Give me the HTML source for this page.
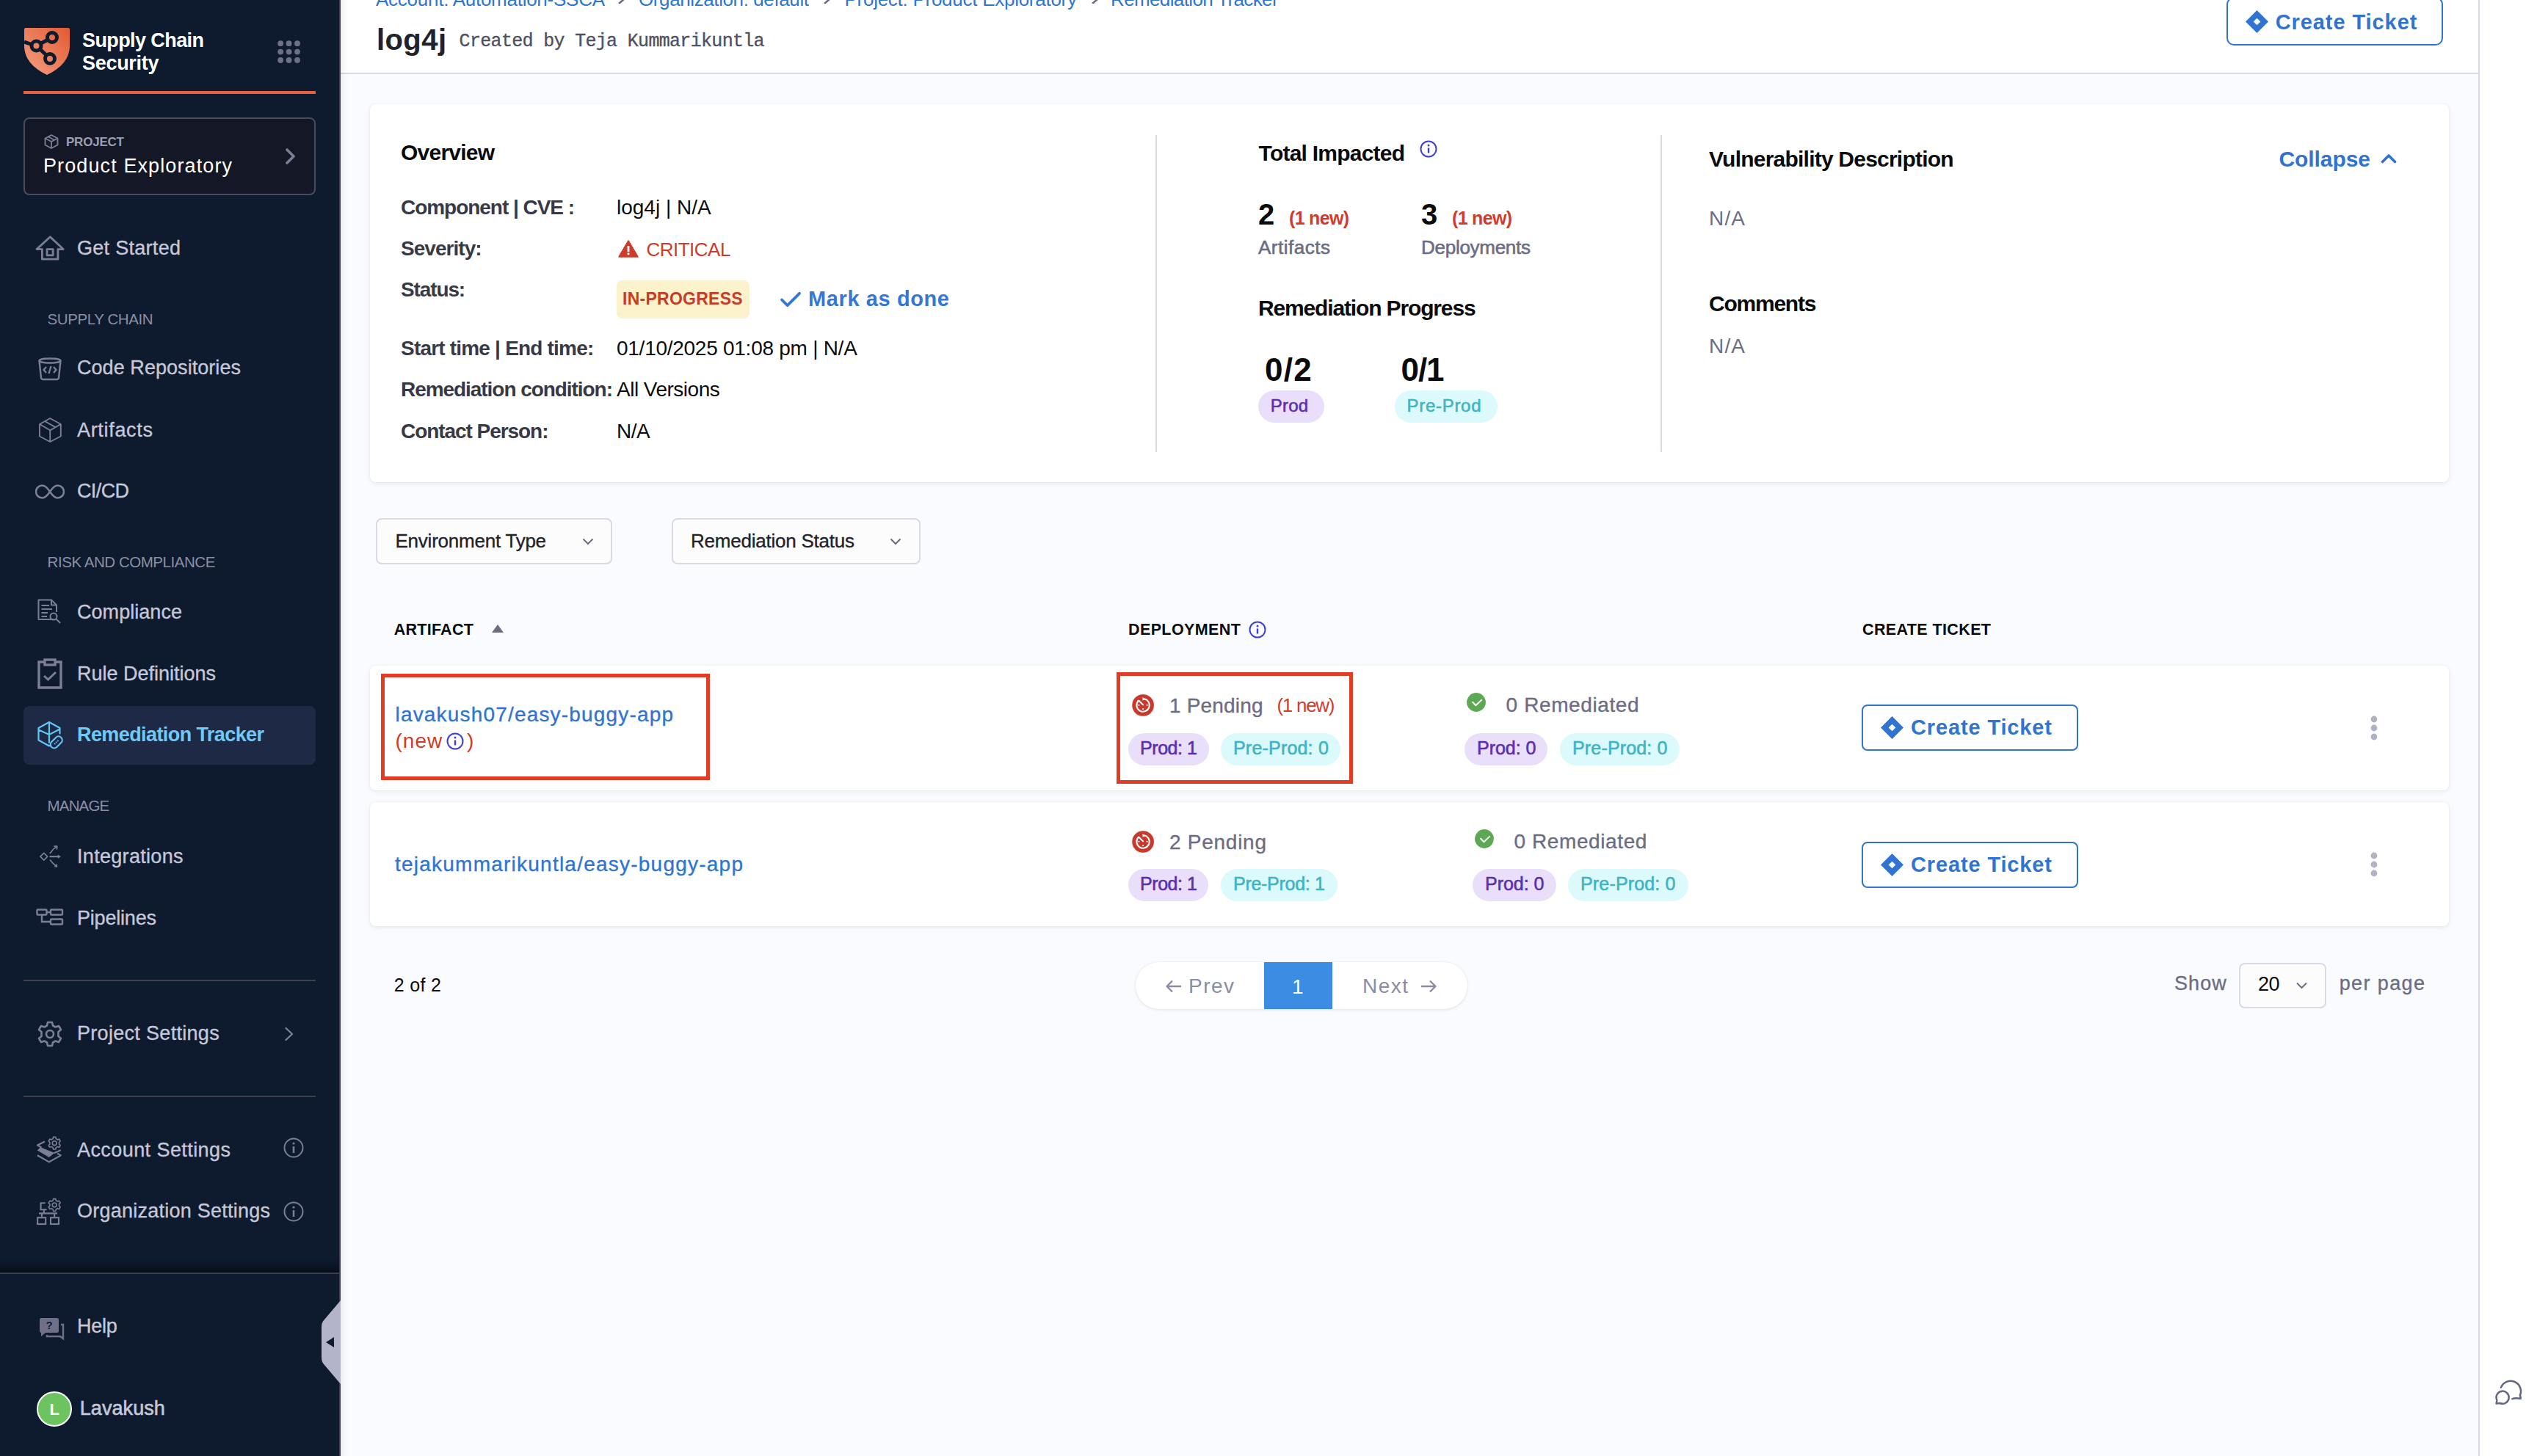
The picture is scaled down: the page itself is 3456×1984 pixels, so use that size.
<!DOCTYPE html>
<html><head><meta charset="utf-8"><style>
html,body{margin:0;padding:0;width:3456px;height:1984px;overflow:hidden;background:#f9fbfe;}
#root{position:relative;width:3456px;height:1984px;overflow:hidden;font-family:'Liberation Sans',sans-serif;}
</style></head><body><div id="root">
<div style="position:absolute;left:0px;top:0px;width:3456px;height:1984px;background:#f9fbfe"></div>
<div style="position:absolute;left:464px;top:0px;width:2913px;height:101px;background:#fff;border-bottom:2px solid #d9dae6;box-sizing:border-box"></div>
<div style="position:absolute;left:3376px;top:0px;width:80px;height:1984px;background:#fff;border-left:2px solid #d9dae6;box-sizing:border-box"></div>
<div style="position:absolute;left:0px;top:0px;width:464px;height:1984px;background:#0e1b2f"></div>
<div style="position:absolute;left:462px;top:0px;width:2px;height:1984px;background:#3a3d50"></div>
<div style="position:absolute;left:464px;top:0px;width:10px;height:1984px;background:linear-gradient(to right,rgba(40,41,61,0.06),rgba(40,41,61,0))"></div>
<svg style="position:absolute;left:33px;top:38px;" width="62" height="64" viewBox="0 0 62 64" fill="none"><defs><linearGradient id="lg" x1="0" y1="1" x2="1" y2="0"><stop offset="0" stop-color="#f3a184"/><stop offset="1" stop-color="#e35a30"/></linearGradient></defs>
<path d="M2 0H60Q62 0 62 2V24C62 42 50 55 31 64C12 55 0 42 0 24V2Q0 0 2 0Z" fill="url(#lg)"/>
<g stroke="#0e1b2f" stroke-width="5" fill="none"><circle cx="38" cy="13" r="6.5"/><circle cx="16.5" cy="24.5" r="6.5"/><circle cx="35" cy="42" r="6.5"/>
<path d="M22 21.5L32.5 16M21.5 29L30 37M10 22.5L0 19"/></g></svg>
<div style="position:absolute;left:112px;top:41.55px;font:700 27px/27px 'Liberation Sans';color:#ffffff;white-space:pre;letter-spacing:-0.592px;">Supply Chain</div>
<div style="position:absolute;left:112px;top:73.05px;font:700 27px/27px 'Liberation Sans';color:#ffffff;white-space:pre;letter-spacing:-0.295px;">Security</div>
<svg style="position:absolute;left:377px;top:55px;" width="34" height="34" viewBox="0 0 34 34" fill="none"><circle cx="5.2" cy="4.2" r="3.9" fill="#6e7088"/><circle cx="5.2" cy="15.6" r="3.9" fill="#6e7088"/><circle cx="5.2" cy="27.0" r="3.9" fill="#6e7088"/><circle cx="16.6" cy="4.2" r="3.9" fill="#6e7088"/><circle cx="16.6" cy="15.6" r="3.9" fill="#6e7088"/><circle cx="16.6" cy="27.0" r="3.9" fill="#6e7088"/><circle cx="28.0" cy="4.2" r="3.9" fill="#6e7088"/><circle cx="28.0" cy="15.6" r="3.9" fill="#6e7088"/><circle cx="28.0" cy="27.0" r="3.9" fill="#6e7088"/></svg>
<div style="position:absolute;left:32px;top:124px;width:398px;height:4px;background:#e8603e"></div>
<div style="position:absolute;left:32px;top:160px;width:398px;height:106px;background:#141826;border:2px solid #4a4c5e;border-radius:8px;box-sizing:border-box"></div>
<svg style="position:absolute;left:59px;top:182px;" width="22" height="22" viewBox="0 0 22 22" fill="none"><g stroke="#7c7e96" stroke-width="1.8" stroke-linejoin="round"><path d="M11 2L19.5 6.5V15.5L11 20L2.5 15.5V6.5Z"/><path d="M2.5 6.5L11 11L19.5 6.5M11 11V20"/><path d="M6.5 4.3L15 8.8"/></g></svg>
<div style="position:absolute;left:90px;top:184.55px;font:700 17px/17px 'Liberation Sans';color:#9c9eb4;white-space:pre;letter-spacing:-0.216px;">PROJECT</div>
<div style="position:absolute;left:59px;top:213.05px;font:400 27px/27px 'Liberation Sans';color:#ffffff;white-space:pre;letter-spacing:1.105px;">Product Exploratory</div>
<svg style="position:absolute;left:388px;top:202px;" width="16" height="22" viewBox="0 0 16 22" fill="none"><path d="M3 2L12 11L3 20" stroke="#7c7e96" stroke-width="3.6" stroke-linecap="round" stroke-linejoin="round"/></svg>
<svg style="position:absolute;left:40px;top:300px;" width="60" height="70" viewBox="0 0 60 70" fill="none"><g stroke="#7c7e96" stroke-width="2.8" stroke-linejoin="round" fill="none"><path d="M10 39.6L28.3 22.8L46.2 39.6H38.9V53.2H17.4V39.6Z"/><rect x="24" y="39.6" width="8.2" height="8.2"/></g></svg>
<div style="position:absolute;left:105px;top:324.55px;font:400 27px/27px 'Liberation Sans';color:#c6c7d8;white-space:pre;letter-spacing:0.292px;-webkit-text-stroke:0.35px currentColor;">Get Started</div>
<div style="position:absolute;left:64.6px;top:424.57px;font:400 20.5px/20.5px 'Liberation Sans';color:#8c8ea4;white-space:pre;letter-spacing:-0.409px;">SUPPLY CHAIN</div>
<svg style="position:absolute;left:51px;top:487px;" width="34" height="32" viewBox="0 0 34 32" fill="none"><g stroke="#7c7e96" stroke-width="2.4" stroke-linejoin="round" fill="none"><ellipse cx="17" cy="4.5" rx="14.5" ry="3"/><path d="M2.5 4.5L5 28Q5.5 30 8 30H26Q28.5 30 29 28L31.5 4.5"/><path d="M12 13L8.5 17L12 21M22 13L25.5 17L22 21M18.5 12L15.5 22"/></g></svg>
<div style="position:absolute;left:105px;top:488.05px;font:400 27px/27px 'Liberation Sans';color:#c6c7d8;white-space:pre;letter-spacing:0.055px;-webkit-text-stroke:0.35px currentColor;">Code Repositories</div>
<svg style="position:absolute;left:53px;top:569px;" width="32" height="34" viewBox="0 0 32 34" fill="none"><g stroke="#7c7e96" stroke-width="1.9" stroke-linejoin="round" fill="none"><path d="M15.2 1L29.8 9V25.5L15.2 33L1 25.5V9Z"/><path d="M1 9L15.2 17.3L29.8 9M15.2 17.3V33M8 5L22.5 13.2"/></g></svg>
<div style="position:absolute;left:105px;top:573.05px;font:400 27px/27px 'Liberation Sans';color:#c6c7d8;white-space:pre;letter-spacing:0.684px;-webkit-text-stroke:0.35px currentColor;">Artifacts</div>
<svg style="position:absolute;left:48px;top:659px;" width="40" height="22" viewBox="0 0 40 22" fill="none"><path d="M20 11C16 5 13 2.5 9.5 2.5A8.5 8.5 0 0 0 9.5 19.5C13 19.5 16 17 20 11C24 5 27 2.5 30.5 2.5A8.5 8.5 0 0 1 30.5 19.5C27 19.5 24 17 20 11Z" stroke="#7c7e96" stroke-width="2.6"/></svg>
<div style="position:absolute;left:105px;top:656.05px;font:400 27px/27px 'Liberation Sans';color:#c6c7d8;white-space:pre;letter-spacing:-0.625px;-webkit-text-stroke:0.35px currentColor;">CI/CD</div>
<div style="position:absolute;left:64.6px;top:755.58px;font:400 20.5px/20.5px 'Liberation Sans';color:#8c8ea4;white-space:pre;letter-spacing:-0.453px;">RISK AND COMPLIANCE</div>
<svg style="position:absolute;left:51px;top:816px;" width="33" height="36" viewBox="0 0 33 36" fill="none"><g stroke="#7c7e96" stroke-width="2" fill="none" stroke-linejoin="round"><path d="M22 28H1.5V1.5H19L26 8.5V18"/><path d="M19 1.5V8.5H26M5.5 9H16M5.5 14H20M5.5 19H14M5.5 24H13"/><circle cx="22" cy="24" r="4.5"/><path d="M25.5 27.5L31 33"/></g></svg>
<div style="position:absolute;left:105px;top:821.05px;font:400 27px/27px 'Liberation Sans';color:#c6c7d8;white-space:pre;letter-spacing:0.047px;-webkit-text-stroke:0.35px currentColor;">Compliance</div>
<svg style="position:absolute;left:50px;top:897px;" width="36" height="42" viewBox="0 0 36 42" fill="none"><g stroke="#7c7e96" stroke-width="3.4" fill="none"><path d="M10 5H3V40H33V5H26"/><rect x="11" y="2" width="14" height="7"/><path d="M10 24L15.5 29L26 19" stroke-width="3"/></g></svg>
<div style="position:absolute;left:105px;top:905.05px;font:400 27px/27px 'Liberation Sans';color:#c6c7d8;white-space:pre;letter-spacing:-0.006px;-webkit-text-stroke:0.35px currentColor;">Rule Definitions</div>
<div style="position:absolute;left:32px;top:962px;width:398px;height:80px;background:#1e2a45;border-radius:8px"></div>
<svg style="position:absolute;left:40px;top:970px;" width="60" height="60" viewBox="0 0 60 60" fill="none"><g stroke="#5fc5f5" stroke-width="2.2" fill="none" stroke-linejoin="round" stroke-linecap="round"><path d="M27 14L41.5 22V29.5M27 14L12.5 22V38.5L27 46.5L29 45.4M12.5 24.5L27 31L41.5 23.5M27 15V42"/><rect x="27.5" y="36.5" width="18.5" height="10" rx="5" transform="rotate(-45 36.7 41.5)"/></g><g fill="#5fc5f5"><circle cx="34.6" cy="43.6" r="1"/><circle cx="36.7" cy="41.5" r="1"/><circle cx="38.8" cy="39.4" r="1"/></g></svg>
<div style="position:absolute;left:105px;top:988.05px;font:700 27px/27px 'Liberation Sans';color:#6fcaf7;white-space:pre;letter-spacing:-0.590px;">Remediation Tracker</div>
<div style="position:absolute;left:64.6px;top:1088.17px;font:400 20.5px/20.5px 'Liberation Sans';color:#8c8ea4;white-space:pre;letter-spacing:-0.852px;">MANAGE</div>
<svg style="position:absolute;left:40px;top:1140px;" width="60" height="60" viewBox="0 0 60 60" fill="none"><g stroke="#7c7e96" stroke-width="1.7" fill="none" stroke-linecap="round" stroke-linejoin="round"><path d="M19.8 22.3L24.7 27.2L19.8 32.1L14.9 27.2Z"/><path d="M28.4 27.2H40" stroke-width="2.2"/><path d="M28.4 22.5Q32 17 37.2 13.4M34 13.2L37.7 13L37.5 17"/><path d="M28.4 32.1Q32 37 37.2 40.8"/></g><path d="M43 27.2L38.8 24.6V29.8Z" fill="#7c7e96"/><path d="M38.3 41.8L33.6 41.2L37.8 36.8Z" fill="#7c7e96"/></svg>
<div style="position:absolute;left:105px;top:1154.05px;font:400 27px/27px 'Liberation Sans';color:#c6c7d8;white-space:pre;letter-spacing:0.310px;-webkit-text-stroke:0.35px currentColor;">Integrations</div>
<svg style="position:absolute;left:49px;top:1238px;" width="38" height="24" viewBox="0 0 38 24" fill="none"><g stroke="#7c7e96" stroke-width="2.4" fill="none"><rect x="1.5" y="1.5" width="13" height="7" rx="1"/><rect x="20" y="1.5" width="16" height="7" rx="1"/><rect x="20" y="14.5" width="16" height="7" rx="1"/><path d="M14.5 5H20M8 8.5V18H20"/></g></svg>
<div style="position:absolute;left:105px;top:1238.05px;font:400 27px/27px 'Liberation Sans';color:#c6c7d8;white-space:pre;letter-spacing:-0.197px;-webkit-text-stroke:0.35px currentColor;">Pipelines</div>
<div style="position:absolute;left:32px;top:1335px;width:398px;height:2px;background:#3c3f52"></div>
<svg style="position:absolute;left:51px;top:1391px;" width="34" height="36" viewBox="0 0 34 36" fill="none"><g stroke="#7c7e96" stroke-width="2.6" fill="none" stroke-linejoin="round"><path d="M14 2H20L21 6.5L24.5 8.5L29 7L32 12L28.5 15V21L32 24L29 29L24.5 27.5L21 29.5L20 34H14L13 29.5L9.5 27.5L5 29L2 24L5.5 21V15L2 12L5 7L9.5 8.5L13 6.5Z"/><circle cx="17" cy="18" r="5"/></g></svg>
<div style="position:absolute;left:105px;top:1395.05px;font:400 27px/27px 'Liberation Sans';color:#c6c7d8;white-space:pre;letter-spacing:0.307px;-webkit-text-stroke:0.35px currentColor;">Project Settings</div>
<svg style="position:absolute;left:387px;top:1399px;" width="14" height="20" viewBox="0 0 14 20" fill="none"><path d="M2.5 2L11 10L2.5 18" stroke="#7c7e96" stroke-width="2.4" stroke-linecap="round" stroke-linejoin="round"/></svg>
<div style="position:absolute;left:32px;top:1493px;width:398px;height:2px;background:#3c3f52"></div>
<svg style="position:absolute;left:40px;top:1540px;" width="60" height="60" viewBox="0 0 60 60" fill="none"><g stroke="#7c7e96" stroke-width="2.2" fill="none" stroke-linejoin="round"><path d="M21 15.4L11 20.6L16.5 23.5"/><path d="M10.8 34.2L26.8 43.4L42.8 34.4L38 31.6"/></g><path d="M10.7 27.6L15.2 23.2L34.2 31L26.8 37Z" fill="#7c7e96"/><path d="M33.5 31.2L42.8 27.2" stroke="#7c7e96" stroke-width="2.2"/><g transform="translate(34.2 17.7)"><path d="M-1.6 -8.3H1.6L2.1 -6A6.2 6.2 0 0 1 4.2 -4.8L6.4 -5.6L8 -2.8L6.3 -1.2A6.2 6.2 0 0 1 6.3 1.2L8 2.8L6.4 5.6L4.2 4.8A6.2 6.2 0 0 1 2.1 6L1.6 8.3H-1.6L-2.1 6A6.2 6.2 0 0 1 -4.2 4.8L-6.4 5.6L-8 2.8L-6.3 1.2A6.2 6.2 0 0 1 -6.3 -1.2L-8 -2.8L-6.4 -5.6L-4.2 -4.8A6.2 6.2 0 0 1 -2.1 -6Z" stroke="#7c7e96" stroke-width="1.6" fill="none" stroke-linejoin="round"/><circle r="2.9" stroke="#7c7e96" stroke-width="1.6" fill="none"/></g></svg>
<div style="position:absolute;left:105px;top:1554.05px;font:400 27px/27px 'Liberation Sans';color:#c6c7d8;white-space:pre;letter-spacing:0.425px;-webkit-text-stroke:0.35px currentColor;">Account Settings</div>
<svg style="position:absolute;left:386px;top:1550px;" width="28" height="28" viewBox="0 0 28 28" fill="none"><g stroke="#7c7e96" stroke-width="2"><circle cx="14" cy="14" r="12.5"/><path d="M14 12V21" stroke-width="2.6"/></g><circle cx="14" cy="8" r="1.6" fill="#7c7e96"/></svg>
<svg style="position:absolute;left:40px;top:1625px;" width="60" height="60" viewBox="0 0 60 60" fill="none"><g stroke="#7c7e96" stroke-width="2.1" fill="none"><path d="M21.6 14.2H15.6V23.2H23.6M19.8 23.2V28.4M13 28.4H38M16.9 28.4V33.8M34.2 28.4V33.8"/><rect x="11.2" y="34.2" width="11" height="8.8"/><rect x="29" y="34.2" width="11" height="8.8"/></g><g transform="translate(34.2 16.9)"><path d="M-1.6 -8.3H1.6L2.1 -6A6.2 6.2 0 0 1 4.2 -4.8L6.4 -5.6L8 -2.8L6.3 -1.2A6.2 6.2 0 0 1 6.3 1.2L8 2.8L6.4 5.6L4.2 4.8A6.2 6.2 0 0 1 2.1 6L1.6 8.3H-1.6L-2.1 6A6.2 6.2 0 0 1 -4.2 4.8L-6.4 5.6L-8 2.8L-6.3 1.2A6.2 6.2 0 0 1 -6.3 -1.2L-8 -2.8L-6.4 -5.6L-4.2 -4.8A6.2 6.2 0 0 1 -2.1 -6Z" stroke="#7c7e96" stroke-width="1.6" fill="none" stroke-linejoin="round"/><circle r="2.9" stroke="#7c7e96" stroke-width="1.6" fill="none"/></g></svg>
<div style="position:absolute;left:105px;top:1637.05px;font:400 27px/27px 'Liberation Sans';color:#c6c7d8;white-space:pre;letter-spacing:0.242px;-webkit-text-stroke:0.35px currentColor;">Organization Settings</div>
<svg style="position:absolute;left:386px;top:1637px;" width="28" height="28" viewBox="0 0 28 28" fill="none"><g stroke="#7c7e96" stroke-width="2"><circle cx="14" cy="14" r="12.5"/><path d="M14 12V21" stroke-width="2.6"/></g><circle cx="14" cy="8" r="1.6" fill="#7c7e96"/></svg>
<div style="position:absolute;left:0px;top:1712px;width:462px;height:22px;background:linear-gradient(to bottom,rgba(0,0,0,0),rgba(0,0,0,0.12) 50%,rgba(0,0,0,0.55))"></div>
<div style="position:absolute;left:0px;top:1734px;width:462px;height:2px;background:#3a3d4f"></div>
<svg style="position:absolute;left:52px;top:1795px;" width="38" height="34" viewBox="0 0 38 34" fill="none"><path d="M4 1H26Q28 1 28 3V19Q28 21 26 21H10L4 26V21Q2 21 2 19V3Q2 1 4 1Z" fill="#6e7088"/><path d="M31 10H34V29L30 26H12V24" stroke="#6e7088" stroke-width="2.4" fill="none"/><text x="15" y="16" font-family="Liberation Sans" font-weight="700" font-size="15" fill="#0e1b2f" text-anchor="middle">?</text></svg>
<div style="position:absolute;left:105px;top:1794.05px;font:400 27px/27px 'Liberation Sans';color:#c6c7d8;white-space:pre;letter-spacing:-0.277px;-webkit-text-stroke:0.35px currentColor;">Help</div>
<svg style="position:absolute;left:438px;top:1772px;" width="26" height="114" viewBox="0 0 26 114" fill="none"><path d="M26 0V114L4 88Q0 84 0 78V36Q0 30 4 26Z" fill="#b3b4c9"/><path d="M6 57L17 50V64Z" fill="#0e1b2f"/></svg>
<div style="position:absolute;left:50px;top:1896px;width:48px;height:48px;border-radius:50%;background:#6dc35f;border:2px solid #fff;box-sizing:border-box"></div>
<div style="position:absolute;left:67.5px;top:1910.30px;font:700 22px/22px 'Liberation Sans';color:#fff;white-space:pre;">L</div>
<div style="position:absolute;left:108.8px;top:1906.05px;font:400 27px/27px 'Liberation Sans';color:#c6c7d8;white-space:pre;letter-spacing:0.058px;-webkit-text-stroke:0.6px currentColor;">Lavakush</div>
<div style="position:absolute;left:512px;top:-14.10px;font:400 26px/26px 'Liberation Sans';color:#2f76d2;white-space:pre;letter-spacing:-0.259px;">Account: Automation-SSCA</div>
<svg style="position:absolute;left:841px;top:-9px;" width="12" height="14" viewBox="0 0 12 14" fill="none"><path d="M2 0L10 7L2 14" stroke="#6b6d85" stroke-width="2.6" fill="none"/></svg>
<div style="position:absolute;left:870px;top:-14.10px;font:400 26px/26px 'Liberation Sans';color:#2f76d2;white-space:pre;letter-spacing:-0.397px;">Organization: default</div>
<svg style="position:absolute;left:1121px;top:-9px;" width="12" height="14" viewBox="0 0 12 14" fill="none"><path d="M2 0L10 7L2 14" stroke="#6b6d85" stroke-width="2.6" fill="none"/></svg>
<div style="position:absolute;left:1150.5px;top:-14.10px;font:400 26px/26px 'Liberation Sans';color:#2f76d2;white-space:pre;letter-spacing:-0.267px;">Project: Product Exploratory</div>
<svg style="position:absolute;left:1486px;top:-9px;" width="12" height="14" viewBox="0 0 12 14" fill="none"><path d="M2 0L10 7L2 14" stroke="#6b6d85" stroke-width="2.6" fill="none"/></svg>
<div style="position:absolute;left:1513px;top:-14.10px;font:400 26px/26px 'Liberation Sans';color:#2f76d2;white-space:pre;letter-spacing:-0.627px;">Remediation Tracker</div>
<div style="position:absolute;left:513px;top:34.00px;font:700 40px/40px 'Liberation Sans';color:#22222a;white-space:pre;letter-spacing:0.414px;">log4j</div>
<div style="position:absolute;left:625.6px;top:44.00px;font:400 25px/25px 'Liberation Mono';color:#4f5162;white-space:pre;letter-spacing:-0.681px;-webkit-text-stroke:0.35px currentColor;">Created by Teja Kummarikuntla</div>
<div style="position:absolute;left:3033px;top:-4px;width:295px;height:66px;border:2px solid #3173d1;border-radius:10px;box-sizing:border-box;background:#fff"></div>
<svg style="position:absolute;left:3059px;top:14px;" width="31" height="31" viewBox="0 0 32 32" fill="none"><path d="M16 0L32 16L16 32L0 16Z" fill="#3173d1"/><path d="M16 11L21 16L16 21L11 16Z" fill="#fff"/></svg>
<div style="position:absolute;left:3099.7px;top:15.75px;font:700 29px/29px 'Liberation Sans';color:#3173d1;white-space:pre;letter-spacing:0.923px;">Create Ticket</div>
<div style="position:absolute;left:504px;top:142px;width:2832px;height:515px;background:#fff;border-radius:8px;box-shadow:0 0 2px rgba(40,41,61,0.08),0 2px 6px rgba(96,97,112,0.10)"></div>
<div style="position:absolute;left:1574px;top:184px;width:2px;height:432px;background:#d9dae6"></div>
<div style="position:absolute;left:2262px;top:184px;width:2px;height:432px;background:#d9dae6"></div>
<div style="position:absolute;left:546px;top:192.50px;font:700 30px/30px 'Liberation Sans';color:#0b0b0d;white-space:pre;letter-spacing:-0.775px;">Overview</div>
<div style="position:absolute;left:546px;top:269.20px;font:700 28px/28px 'Liberation Sans';color:#383946;white-space:pre;letter-spacing:-1.038px;">Component | CVE :</div>
<div style="position:absolute;left:546px;top:325.20px;font:700 28px/28px 'Liberation Sans';color:#383946;white-space:pre;letter-spacing:-0.962px;">Severity:</div>
<div style="position:absolute;left:546px;top:380.70px;font:700 28px/28px 'Liberation Sans';color:#383946;white-space:pre;letter-spacing:-1.118px;">Status:</div>
<div style="position:absolute;left:546px;top:460.70px;font:700 28px/28px 'Liberation Sans';color:#383946;white-space:pre;letter-spacing:-0.800px;">Start time | End time:</div>
<div style="position:absolute;left:546px;top:517.20px;font:700 28px/28px 'Liberation Sans';color:#383946;white-space:pre;letter-spacing:-1.053px;">Remediation condition:</div>
<div style="position:absolute;left:546px;top:574.20px;font:700 28px/28px 'Liberation Sans';color:#383946;white-space:pre;letter-spacing:-1.054px;">Contact Person:</div>
<div style="position:absolute;left:840px;top:269.20px;font:400 28px/28px 'Liberation Sans';color:#0b0b0d;white-space:pre;letter-spacing:0.003px;">log4j | N/A</div>
<svg style="position:absolute;left:842px;top:327px;" width="28" height="24" viewBox="0 0 28 24" fill="none"><path d="M14 1L27 23H1Z" fill="#cf3b2a" stroke="#cf3b2a" stroke-width="1.5" stroke-linejoin="round"/><rect x="12.6" y="8" width="2.8" height="8" fill="#fff"/><rect x="12.6" y="17.5" width="2.8" height="2.8" fill="#fff"/></svg>
<div style="position:absolute;left:880.4px;top:326.90px;font:400 26px/26px 'Liberation Sans';color:#cf3b2a;white-space:pre;letter-spacing:-0.496px;">CRITICAL</div>
<div style="position:absolute;left:840px;top:382px;width:181px;height:52px;background:#fcf2cc;border-radius:8px"></div>
<div style="position:absolute;left:848px;top:396.45px;font:700 23px/23px 'Liberation Sans';color:#c73c26;white-space:pre;letter-spacing:0.257px;">IN-PROGRESS</div>
<svg style="position:absolute;left:1062px;top:397px;" width="30" height="23" viewBox="0 0 30 24" fill="none"><path d="M2.5 12L10.5 20L27.5 3" stroke="#3478d4" stroke-width="4" fill="none" stroke-linecap="round" stroke-linejoin="round"/></svg>
<div style="position:absolute;left:1101px;top:392.85px;font:700 29px/29px 'Liberation Sans';color:#3478d4;white-space:pre;letter-spacing:0.605px;">Mark as done</div>
<div style="position:absolute;left:840px;top:460.70px;font:400 28px/28px 'Liberation Sans';color:#0b0b0d;white-space:pre;letter-spacing:-0.265px;">01/10/2025 01:08 pm | N/A</div>
<div style="position:absolute;left:840px;top:517.20px;font:400 28px/28px 'Liberation Sans';color:#0b0b0d;white-space:pre;letter-spacing:-0.509px;">All Versions</div>
<div style="position:absolute;left:840px;top:574.20px;font:400 28px/28px 'Liberation Sans';color:#0b0b0d;white-space:pre;letter-spacing:-0.544px;">N/A</div>
<div style="position:absolute;left:1714.6px;top:193.50px;font:700 30px/30px 'Liberation Sans';color:#0b0b0d;white-space:pre;letter-spacing:-0.768px;">Total Impacted</div>
<svg style="position:absolute;left:1934px;top:191px;" width="24" height="24" viewBox="0 0 24 24" fill="none"><circle cx="12" cy="12" r="10.5" stroke="#3d3fd8" stroke-width="2"/><path d="M12 10.5V17.5" stroke="#3d3fd8" stroke-width="2.4"/><circle cx="12" cy="7" r="1.5" fill="#3d3fd8"/></svg>
<div style="position:absolute;left:1714px;top:272.00px;font:700 40px/40px 'Liberation Sans';color:#0b0b0d;white-space:pre;">2</div>
<div style="position:absolute;left:1756px;top:284.75px;font:700 25px/25px 'Liberation Sans';color:#d03b2a;white-space:pre;letter-spacing:-0.688px;">(1 new)</div>
<div style="position:absolute;left:1936px;top:272.00px;font:700 40px/40px 'Liberation Sans';color:#0b0b0d;white-space:pre;">3</div>
<div style="position:absolute;left:1978px;top:284.75px;font:700 25px/25px 'Liberation Sans';color:#d03b2a;white-space:pre;letter-spacing:-0.688px;">(1 new)</div>
<div style="position:absolute;left:1714px;top:323.90px;font:400 26px/26px 'Liberation Sans';color:#6b6d85;white-space:pre;letter-spacing:0.510px;-webkit-text-stroke:0.6px currentColor;">Artifacts</div>
<div style="position:absolute;left:1936px;top:323.90px;font:400 26px/26px 'Liberation Sans';color:#6b6d85;white-space:pre;letter-spacing:-0.273px;-webkit-text-stroke:0.6px currentColor;">Deployments</div>
<div style="position:absolute;left:1714px;top:404.50px;font:700 30px/30px 'Liberation Sans';color:#0b0b0d;white-space:pre;letter-spacing:-1.149px;">Remediation Progress</div>
<div style="position:absolute;left:1723px;top:481.60px;font:700 44px/44px 'Liberation Sans';color:#0b0b0d;white-space:pre;letter-spacing:1.264px;">0/2</div>
<div style="position:absolute;left:1908.6px;top:481.60px;font:700 44px/44px 'Liberation Sans';color:#0b0b0d;white-space:pre;letter-spacing:-1.086px;">0/1</div>
<div style="position:absolute;left:1714px;top:532px;width:90px;height:44px;background:#eadffb;border-radius:22px"></div>
<div style="position:absolute;left:1730.7px;top:541.30px;font:400 24px/24px 'Liberation Sans';color:#5c2fae;white-space:pre;letter-spacing:0.266px;-webkit-text-stroke:0.6px currentColor;">Prod</div>
<div style="position:absolute;left:1900px;top:532px;width:140px;height:44px;background:#dcf9fc;border-radius:22px"></div>
<div style="position:absolute;left:1916.5px;top:541.30px;font:400 24px/24px 'Liberation Sans';color:#3fb5c3;white-space:pre;letter-spacing:0.708px;-webkit-text-stroke:0.6px currentColor;">Pre-Prod</div>
<div style="position:absolute;left:2328px;top:201.50px;font:700 30px/30px 'Liberation Sans';color:#0b0b0d;white-space:pre;letter-spacing:-0.779px;">Vulnerability Description</div>
<div style="position:absolute;left:3104.5px;top:201.50px;font:700 30px/30px 'Liberation Sans';color:#3173d1;white-space:pre;letter-spacing:-0.078px;">Collapse</div>
<svg style="position:absolute;left:3243px;top:209px;" width="22" height="14" viewBox="0 0 22 14" fill="none"><path d="M2.5 11.5L11 3L19.5 11.5" stroke="#3173d1" stroke-width="3.6" fill="none" stroke-linecap="round" stroke-linejoin="round"/></svg>
<div style="position:absolute;left:2328px;top:284.20px;font:400 28px/28px 'Liberation Sans';color:#6b6d85;white-space:pre;letter-spacing:1.156px;">N/A</div>
<div style="position:absolute;left:2328px;top:398.50px;font:700 30px/30px 'Liberation Sans';color:#0b0b0d;white-space:pre;letter-spacing:-1.233px;">Comments</div>
<div style="position:absolute;left:2328px;top:458.20px;font:400 28px/28px 'Liberation Sans';color:#6b6d85;white-space:pre;letter-spacing:1.156px;">N/A</div>
<div style="position:absolute;left:512px;top:706px;width:322px;height:63px;border:2px solid #d9dae6;border-radius:8px;box-sizing:border-box;background:#fcfcfd"></div>
<div style="position:absolute;left:538.5px;top:723.90px;font:400 26px/26px 'Liberation Sans';color:#22222a;white-space:pre;letter-spacing:-0.233px;-webkit-text-stroke:0.35px currentColor;">Environment Type</div>
<svg style="position:absolute;left:793px;top:733px;" width="16" height="10" viewBox="0 0 16 10" fill="none"><path d="M1.5 1.5L8 8L14.5 1.5" stroke="#6b6d85" stroke-width="2" fill="none"/></svg>
<div style="position:absolute;left:915px;top:706px;width:339px;height:63px;border:2px solid #d9dae6;border-radius:8px;box-sizing:border-box;background:#fcfcfd"></div>
<div style="position:absolute;left:941px;top:723.90px;font:400 26px/26px 'Liberation Sans';color:#22222a;white-space:pre;letter-spacing:-0.230px;-webkit-text-stroke:0.35px currentColor;">Remediation Status</div>
<svg style="position:absolute;left:1212px;top:733px;" width="16" height="10" viewBox="0 0 16 10" fill="none"><path d="M1.5 1.5L8 8L14.5 1.5" stroke="#6b6d85" stroke-width="2" fill="none"/></svg>
<div style="position:absolute;left:536.8px;top:847.73px;font:700 21.5px/21.5px 'Liberation Sans';color:#0b0b0d;white-space:pre;letter-spacing:0.243px;">ARTIFACT</div>
<svg style="position:absolute;left:670px;top:851px;" width="16" height="11" viewBox="0 0 16 11" fill="none"><path d="M8 0L16 11H0Z" fill="#6b6d85"/></svg>
<div style="position:absolute;left:1537px;top:847.73px;font:700 21.5px/21.5px 'Liberation Sans';color:#0b0b0d;white-space:pre;letter-spacing:0.386px;">DEPLOYMENT</div>
<svg style="position:absolute;left:1701px;top:846px;" width="24" height="24" viewBox="0 0 24 24" fill="none"><circle cx="12" cy="12" r="10.5" stroke="#3d3fd8" stroke-width="2"/><path d="M12 10.5V17.5" stroke="#3d3fd8" stroke-width="2.4"/><circle cx="12" cy="7" r="1.5" fill="#3d3fd8"/></svg>
<div style="position:absolute;left:2537px;top:848.23px;font:700 21.5px/21.5px 'Liberation Sans';color:#0b0b0d;white-space:pre;letter-spacing:0.383px;">CREATE TICKET</div>
<div style="position:absolute;left:504px;top:907px;width:2832px;height:170px;background:#fff;border-radius:8px;box-shadow:0 0 2px rgba(40,41,61,0.08),0 2px 6px rgba(96,97,112,0.10)"></div>
<div style="position:absolute;left:538.5px;top:960.20px;font:400 28px/28px 'Liberation Sans';color:#2f74cf;white-space:pre;letter-spacing:1.178px;-webkit-text-stroke:0.35px currentColor;">lavakush07/easy-buggy-app</div>
<div style="position:absolute;left:538.5px;top:996.20px;font:400 28px/28px 'Liberation Sans';color:#d03b2a;white-space:pre;letter-spacing:1.032px;">(new</div>
<svg style="position:absolute;left:608px;top:998px;" width="24" height="24" viewBox="0 0 24 24" fill="none"><circle cx="12" cy="12" r="10.5" stroke="#3d3fd8" stroke-width="2"/><path d="M12 10.5V17.5" stroke="#3d3fd8" stroke-width="2.4"/><circle cx="12" cy="7" r="1.5" fill="#3d3fd8"/></svg>
<div style="position:absolute;left:636px;top:996.20px;font:400 28px/28px 'Liberation Sans';color:#d03b2a;white-space:pre;">)</div>
<svg style="position:absolute;left:1530px;top:935px;" width="60" height="50" viewBox="0 0 60 50" fill="none"><circle cx="27.1" cy="26" r="15.6" fill="#e9e9f0"/><circle cx="27.1" cy="26" r="14.8" fill="#c8392b"/><g stroke="#fff" stroke-width="2" fill="none" stroke-linecap="round"><path d="M28 17.3A8.7 8.7 0 1 1 20.9 19.8"/><path d="M21.4 19.8L27.1 25.4"/></g><path d="M26.4 15L30 17.4L26.6 19.8Z" fill="#fff"/><g fill="#fff"><circle cx="21.4" cy="25.8" r="1.1"/><circle cx="32.6" cy="25.8" r="1.1"/><circle cx="27.1" cy="31.1" r="1.1"/></g></svg>
<div style="position:absolute;left:1593px;top:948.00px;font:400 28px/28px 'Liberation Sans';color:#6b6d85;white-space:pre;letter-spacing:0.186px;-webkit-text-stroke:0.35px currentColor;">1 Pending</div>
<div style="position:absolute;left:1739.5px;top:947.90px;font:400 26px/26px 'Liberation Sans';color:#d03b2a;white-space:pre;letter-spacing:-1.284px;">(1 new)</div>
<div style="position:absolute;left:1537px;top:999px;width:109.5px;height:44px;background:#eadffb;border-radius:22px"></div>
<div style="position:absolute;left:1553px;top:1007.25px;font:400 25px/25px 'Liberation Sans';color:#5c2fae;white-space:pre;letter-spacing:-0.435px;-webkit-text-stroke:0.6px currentColor;">Prod: 1</div>
<div style="position:absolute;left:1663px;top:999px;width:163.4000000000001px;height:44px;background:#dcf9fc;border-radius:22px"></div>
<div style="position:absolute;left:1680px;top:1007.25px;font:400 25px/25px 'Liberation Sans';color:#3fb5c3;white-space:pre;letter-spacing:0.196px;-webkit-text-stroke:0.6px currentColor;">Pre-Prod: 0</div>
<svg style="position:absolute;left:1997px;top:943px;" width="28" height="28" viewBox="0 0 28 28" fill="none"><circle cx="14" cy="14" r="12.9" fill="#5da852"/><path d="M9.1 13.7L13.4 18.3L21.1 10.9" stroke="#fff" stroke-width="2" fill="none" stroke-linecap="round" stroke-linejoin="round"/></svg>
<div style="position:absolute;left:2051.6px;top:947.20px;font:400 28px/28px 'Liberation Sans';color:#6b6d85;white-space:pre;letter-spacing:0.605px;-webkit-text-stroke:0.35px currentColor;">0 Remediated</div>
<div style="position:absolute;left:1995px;top:999px;width:113px;height:44px;background:#eadffb;border-radius:22px"></div>
<div style="position:absolute;left:2012px;top:1007.25px;font:400 25px/25px 'Liberation Sans';color:#5c2fae;white-space:pre;letter-spacing:-0.035px;-webkit-text-stroke:0.6px currentColor;">Prod: 0</div>
<div style="position:absolute;left:2125px;top:999px;width:163px;height:44px;background:#dcf9fc;border-radius:22px"></div>
<div style="position:absolute;left:2142px;top:1007.25px;font:400 25px/25px 'Liberation Sans';color:#3fb5c3;white-space:pre;letter-spacing:0.166px;-webkit-text-stroke:0.6px currentColor;">Pre-Prod: 0</div>
<div style="position:absolute;left:2536px;top:960px;width:295px;height:63px;border:2px solid #3173d1;border-radius:8px;box-sizing:border-box;background:#fff"></div>
<svg style="position:absolute;left:2562px;top:976px;" width="31" height="31" viewBox="0 0 32 32" fill="none"><path d="M16 0L32 16L16 32L0 16Z" fill="#3173d1"/><path d="M16 11L21 16L16 21L11 16Z" fill="#fff"/></svg>
<div style="position:absolute;left:2603px;top:977.35px;font:700 29px/29px 'Liberation Sans';color:#3173d1;white-space:pre;letter-spacing:0.865px;">Create Ticket</div>
<svg style="position:absolute;left:3229px;top:975px;" width="10" height="34" viewBox="0 0 10 34" fill="none"><circle cx="5" cy="5" r="4.4" fill="#b0b1c4"/><circle cx="5" cy="17" r="4.4" fill="#b0b1c4"/><circle cx="5" cy="29" r="4.4" fill="#b0b1c4"/></svg>
<div style="position:absolute;left:519px;top:918px;width:448px;height:145px;border:5px solid #e23b26;box-sizing:border-box"></div>
<div style="position:absolute;left:1521px;top:916px;width:322px;height:152px;border:5px solid #e23b26;box-sizing:border-box"></div>
<div style="position:absolute;left:504px;top:1093px;width:2832px;height:169px;background:#fff;border-radius:8px;box-shadow:0 0 2px rgba(40,41,61,0.08),0 2px 6px rgba(96,97,112,0.10)"></div>
<div style="position:absolute;left:538px;top:1163.70px;font:400 28px/28px 'Liberation Sans';color:#2f74cf;white-space:pre;letter-spacing:1.233px;-webkit-text-stroke:0.35px currentColor;">tejakummarikuntla/easy-buggy-app</div>
<svg style="position:absolute;left:1530px;top:1120.6px;" width="60" height="50" viewBox="0 0 60 50" fill="none"><circle cx="27.1" cy="26" r="15.6" fill="#e9e9f0"/><circle cx="27.1" cy="26" r="14.8" fill="#c8392b"/><g stroke="#fff" stroke-width="2" fill="none" stroke-linecap="round"><path d="M28 17.3A8.7 8.7 0 1 1 20.9 19.8"/><path d="M21.4 19.8L27.1 25.4"/></g><path d="M26.4 15L30 17.4L26.6 19.8Z" fill="#fff"/><g fill="#fff"><circle cx="21.4" cy="25.8" r="1.1"/><circle cx="32.6" cy="25.8" r="1.1"/><circle cx="27.1" cy="31.1" r="1.1"/></g></svg>
<div style="position:absolute;left:1593px;top:1134.20px;font:400 28px/28px 'Liberation Sans';color:#6b6d85;white-space:pre;letter-spacing:0.736px;-webkit-text-stroke:0.35px currentColor;">2 Pending</div>
<div style="position:absolute;left:1537px;top:1184px;width:109px;height:44px;background:#eadffb;border-radius:22px"></div>
<div style="position:absolute;left:1553px;top:1192.25px;font:400 25px/25px 'Liberation Sans';color:#5c2fae;white-space:pre;letter-spacing:-0.435px;-webkit-text-stroke:0.6px currentColor;">Prod: 1</div>
<div style="position:absolute;left:1663px;top:1184px;width:159px;height:44px;background:#dcf9fc;border-radius:22px"></div>
<div style="position:absolute;left:1680px;top:1192.25px;font:400 25px/25px 'Liberation Sans';color:#3fb5c3;white-space:pre;letter-spacing:-0.284px;-webkit-text-stroke:0.6px currentColor;">Pre-Prod: 1</div>
<svg style="position:absolute;left:2008px;top:1129px;" width="28" height="28" viewBox="0 0 28 28" fill="none"><circle cx="14" cy="14" r="12.9" fill="#5da852"/><path d="M9.1 13.7L13.4 18.3L21.1 10.9" stroke="#fff" stroke-width="2" fill="none" stroke-linecap="round" stroke-linejoin="round"/></svg>
<div style="position:absolute;left:2062.4px;top:1133.20px;font:400 28px/28px 'Liberation Sans';color:#6b6d85;white-space:pre;letter-spacing:0.605px;-webkit-text-stroke:0.35px currentColor;">0 Remediated</div>
<div style="position:absolute;left:2006px;top:1184px;width:114px;height:44px;background:#eadffb;border-radius:22px"></div>
<div style="position:absolute;left:2023px;top:1192.25px;font:400 25px/25px 'Liberation Sans';color:#5c2fae;white-space:pre;letter-spacing:-0.035px;-webkit-text-stroke:0.6px currentColor;">Prod: 0</div>
<div style="position:absolute;left:2136px;top:1184px;width:164px;height:44px;background:#dcf9fc;border-radius:22px"></div>
<div style="position:absolute;left:2153px;top:1192.25px;font:400 25px/25px 'Liberation Sans';color:#3fb5c3;white-space:pre;letter-spacing:0.166px;-webkit-text-stroke:0.6px currentColor;">Pre-Prod: 0</div>
<div style="position:absolute;left:2536px;top:1147px;width:295px;height:63px;border:2px solid #3173d1;border-radius:8px;box-sizing:border-box;background:#fff"></div>
<svg style="position:absolute;left:2562px;top:1163px;" width="31" height="31" viewBox="0 0 32 32" fill="none"><path d="M16 0L32 16L16 32L0 16Z" fill="#3173d1"/><path d="M16 11L21 16L16 21L11 16Z" fill="#fff"/></svg>
<div style="position:absolute;left:2603px;top:1164.35px;font:700 29px/29px 'Liberation Sans';color:#3173d1;white-space:pre;letter-spacing:0.865px;">Create Ticket</div>
<svg style="position:absolute;left:3229px;top:1161px;" width="10" height="34" viewBox="0 0 10 34" fill="none"><circle cx="5" cy="5" r="4.4" fill="#b0b1c4"/><circle cx="5" cy="17" r="4.4" fill="#b0b1c4"/><circle cx="5" cy="29" r="4.4" fill="#b0b1c4"/></svg>
<div style="position:absolute;left:536.8px;top:1329.75px;font:400 25px/25px 'Liberation Sans';color:#0b0b0d;white-space:pre;letter-spacing:0.287px;">2 of 2</div>
<div style="position:absolute;left:1547px;top:1311px;width:452px;height:64px;background:#fff;border-radius:32px;box-shadow:0 0 2px rgba(40,41,61,0.06),0 1px 4px rgba(96,97,112,0.14)"></div>
<div style="position:absolute;left:1722px;top:1311px;width:93px;height:64px;background:#3c8ce3"></div>
<div style="position:absolute;left:1760px;top:1330.70px;font:400 28px/28px 'Liberation Sans';color:#fff;white-space:pre;">1</div>
<div style="position:absolute;left:1619px;top:1329.70px;font:400 28px/28px 'Liberation Sans';color:#8a8ca4;white-space:pre;letter-spacing:1.474px;">Prev</div>
<svg style="position:absolute;left:1587px;top:1333.5px;" width="24" height="20" viewBox="0 0 24 20" fill="none"><path d="M22 10H3M10 2.5L2.5 10L10 17.5" stroke="#8a8ca4" stroke-width="2.4" fill="none" stroke-linejoin="round"/></svg>
<div style="position:absolute;left:1856px;top:1329.70px;font:400 28px/28px 'Liberation Sans';color:#8a8ca4;white-space:pre;letter-spacing:1.474px;">Next</div>
<svg style="position:absolute;left:1934px;top:1333.5px;" width="24" height="20" viewBox="0 0 24 20" fill="none"><path d="M2 10H21M14 2.5L21.5 10L14 17.5" stroke="#8a8ca4" stroke-width="2.4" fill="none" stroke-linejoin="round"/></svg>
<div style="position:absolute;left:2962px;top:1326.75px;font:400 27px/27px 'Liberation Sans';color:#6b6d85;white-space:pre;letter-spacing:1.051px;-webkit-text-stroke:0.35px currentColor;">Show</div>
<div style="position:absolute;left:3050px;top:1312px;width:119px;height:62px;border:2px solid #d9dae6;border-radius:8px;box-sizing:border-box;background:#fcfcfd"></div>
<div style="position:absolute;left:3076px;top:1328.05px;font:400 27px/27px 'Liberation Sans';color:#0b0b0d;white-space:pre;letter-spacing:-0.547px;">20</div>
<svg style="position:absolute;left:3127px;top:1338px;" width="17" height="10" viewBox="0 0 16 10" fill="none"><path d="M1.5 1.5L8 8L14.5 1.5" stroke="#6b6d85" stroke-width="2" fill="none"/></svg>
<div style="position:absolute;left:3186.7px;top:1326.75px;font:400 27px/27px 'Liberation Sans';color:#6b6d85;white-space:pre;letter-spacing:1.387px;-webkit-text-stroke:0.35px currentColor;">per page</div>
<svg style="position:absolute;left:3380px;top:1860px;" width="76" height="70" viewBox="0 0 76 70" fill="none"><g stroke="#646783" stroke-width="2.5" fill="none" stroke-linecap="round" stroke-linejoin="round"><path d="M27 30.5A13.6 13.6 0 1 1 53 41L53.8 45.8L48 45.2Q45 45 42.4 46.2"/><path d="M20.6 52.6L21.4 48A8.6 8.6 0 1 1 25.5 52Z"/></g></svg>
</div></body></html>
